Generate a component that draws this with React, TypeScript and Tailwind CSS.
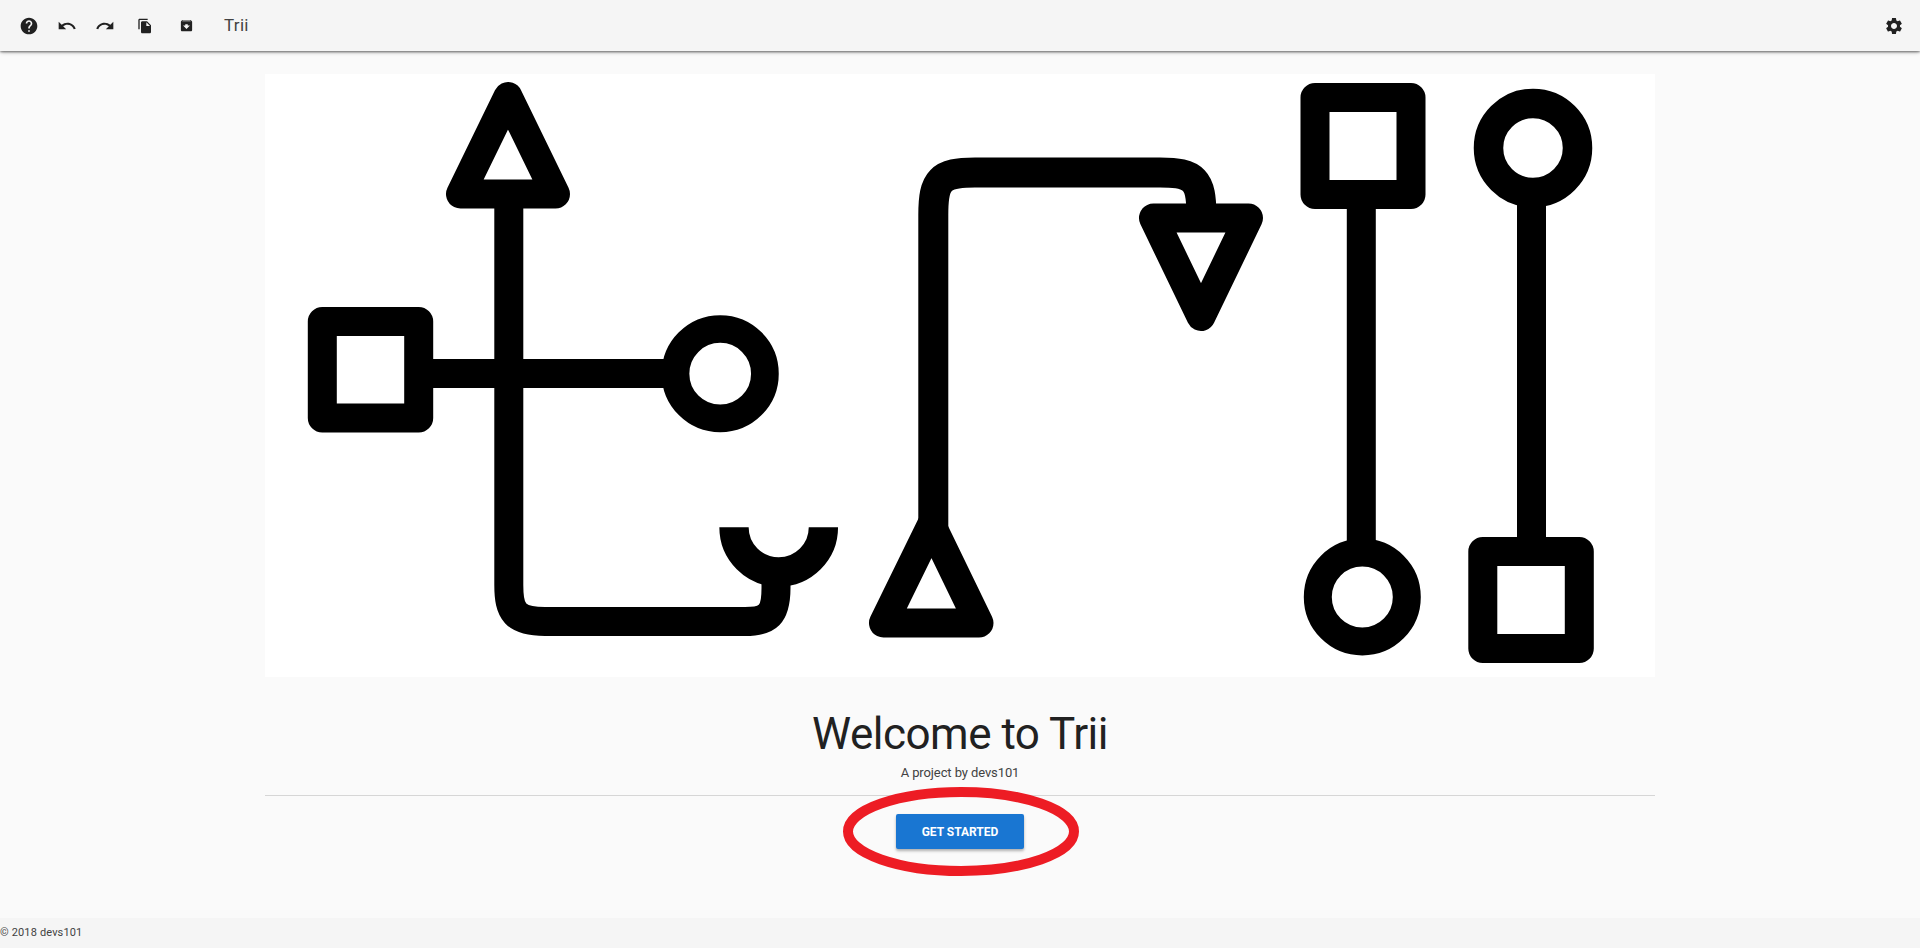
import { MdHelp, MdUndo, MdRedo, MdFileCopy, MdArchive, MdSettings } from "react-icons/md";

function Logo() {
  return (
    <svg viewBox="265 74 1390 603" className="block w-full h-full" fill="none" stroke="#000" strokeWidth={29}>
      <path d="M508.8 195 V585 C508.8 612 515 621.5 545 621.5 H745 C768 621.5 776 615 776 588 V570" />
      <path d="M419 373.6 H680" />
      <path d="M734 527.3 A44.7 44.7 0 0 0 823.4 527.3" strokeWidth={29.3} />
      <polygon points="508,96.5 460.5,194 555.5,194" strokeLinejoin="round" />
      <rect x="322.3" y="321.5" width="96.4" height="96.5" strokeLinejoin="round" />
      <circle cx="720.2" cy="373.7" r="44.7" strokeWidth={27.7} />
      <path d="M933.3 530 V215 C933.3 180 940 172.5 975 172.5 H1160 C1195 172.5 1201.4 180 1201.4 215" strokeWidth={30} />
      <polygon points="931.5,525 883.5,623 979,623" strokeLinejoin="round" />
      <polygon points="1201,316.5 1153.5,218 1248.5,218" strokeLinejoin="round" />
      <rect x="1315" y="97.5" width="96" height="97" strokeLinejoin="round" />
      <path d="M1361.3 194 V560" />
      <circle cx="1362.3" cy="597" r="44.5" strokeWidth={28} />
      <circle cx="1533" cy="148" r="44.5" strokeWidth={29.5} />
      <path d="M1531.5 190 V555" />
      <rect x="1482.8" y="551.5" width="96.5" height="97" strokeLinejoin="round" />
    </svg>
  );
}

export default function App() {
  return (
    <div className="flex flex-col h-[948px] bg-[#fafafa] text-[#212121] overflow-hidden font-['Roboto',sans-serif]">
      <header className="relative z-10 flex items-center h-[51px] shrink-0 bg-[#f5f5f5] shadow-[0_2px_4px_-1px_rgba(0,0,0,0.35),0_1px_2px_rgba(0,0,0,0.4)] pl-[19px] pr-[16px] text-[#212121]">
        <MdHelp size={20} />
        <MdUndo size={20} className="ml-[18px]" />
        <MdRedo size={20} className="ml-[18px]" />
        <MdFileCopy size={16} className="ml-[22px]" />
        <MdArchive size={15} className="ml-[26px]" />
        <span className="ml-[30px] text-[17px] leading-none text-[#424242] tracking-[0.3px]">Trii</span>
        <MdSettings size={20} className="ml-auto" />
      </header>
      <main className="flex-1 flex flex-col items-center">
        <div className="w-[1390px] h-[603px] mt-[23px] bg-white shrink-0">
          <Logo />
        </div>
        <h1 className="mt-[33px] text-[44px] leading-[48px] font-normal tracking-[-0.5px] text-[#212121]">Welcome to Trii</h1>
        <p className="mt-[7px] text-[13px] leading-[16px] tracking-[-0.1px] text-[#424242]">A project by devs101</p>
        <hr className="w-[1390px] mt-[14px] border-0 border-t border-[#d6d6d6]" />
        <div className="relative mt-[18px]">
          <button className="block w-[128px] h-[35px] bg-[#1976d2] text-white text-[12px] font-bold rounded-[2px] shadow-[0_2px_3px_rgba(0,0,0,0.3)]">GET STARTED</button>
          <svg className="absolute left-[-53px] top-[-27px] w-[236px] h-[89px] pointer-events-none" viewBox="0 0 236 89" fill="none">
            <ellipse cx="118" cy="44.5" rx="113" ry="39.5" stroke="#ed1c24" strokeWidth="10" />
          </svg>
        </div>
      </main>
      <footer className="h-[30px] shrink-0 flex items-center bg-[#f5f5f5] text-[11px] tracking-[0.15px] text-[#424242]">© 2018 devs101</footer>
    </div>
  );
}
